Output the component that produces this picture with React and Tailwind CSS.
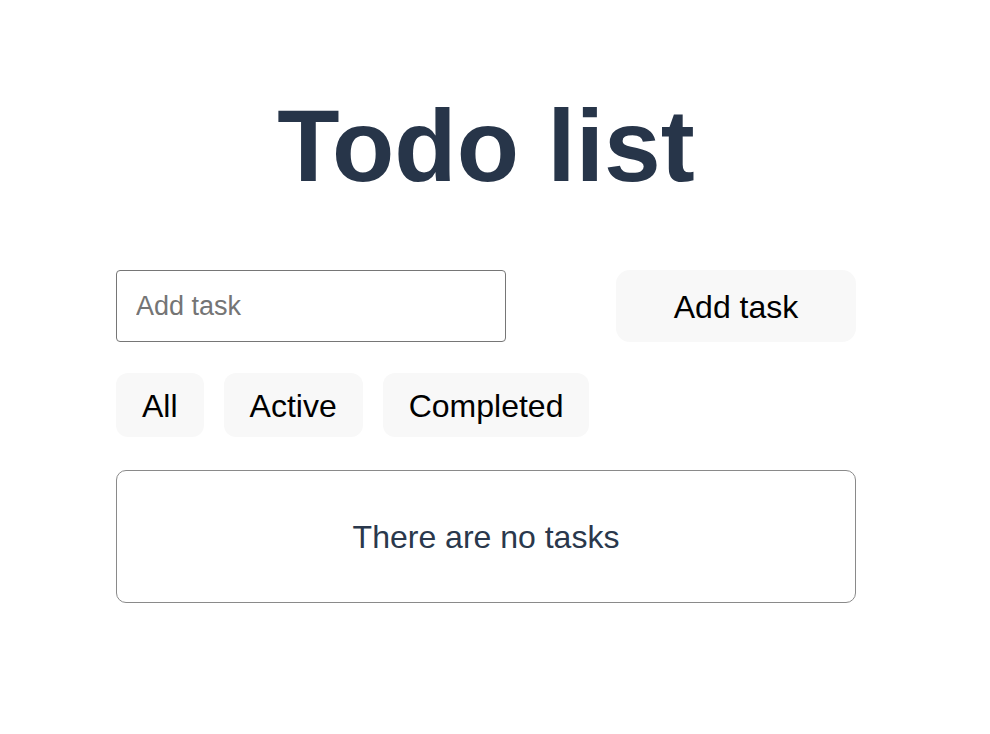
import React, {useState} from "react";

const filters = ['All', 'Active', 'Completed']

export default function App(){
    const [text, setText] = useState("");
    const [tasks, setTasks] = useState([]);
    const [filter, setFilter] = useState('All');

    function add(){
        if(!text.trim()) return;
        setTasks([...tasks, {id: Date.now(), title: text.trim(), done: false}]);
        setText("");
    }

    const visible = tasks.filter(t => filter === 'All' ? true : filter === 'Active' ? !t.done : t.done);

    return (
        <div className="min-h-screen bg-white font-['Liberation_Sans',Arial,sans-serif]">
            <div className="w-[740px] ml-[116px] pt-[95px]">
                <h1 className="text-center text-[102px] leading-none font-bold text-[#273549]">Todo list</h1>

                <div className="flex justify-between mt-[73px]">
                    <input
                        value={text}
                        onChange={e => setText(e.target.value)}
                        placeholder="Add task"
                        className="w-[390px] h-[72px] px-[19px] border border-[#767676] rounded-[4px] text-[27px] text-black placeholder:text-[#757575] outline-none"
                    />
                    <button onClick={add} className="w-[240px] h-[72px] pt-[2px] rounded-[14px] bg-[#f8f8f8] text-[32px] text-black">Add task</button>
                </div>

                <div className="flex gap-5 mt-[31px]">
                    {filters.map(f => (
                        <button key={f} onClick={() => setFilter(f)} className="h-16 pt-[2px] px-[26px] rounded-[12px] bg-[#f8f8f8] text-[32px] text-black">{f}</button>
                    ))}
                </div>

                <div className="mt-[33px] border border-[#8a8a8a] rounded-[10px] min-h-[133px] flex flex-col items-center justify-center">
                    {visible.length === 0
                        ? <p className="text-[32px] text-[#2a384c]">There are no tasks</p>
                        : visible.map(t => <p key={t.id} className="text-[28px] text-[#2a384c]">{t.title}</p>)}
                </div>
            </div>
        </div>
    )
}
